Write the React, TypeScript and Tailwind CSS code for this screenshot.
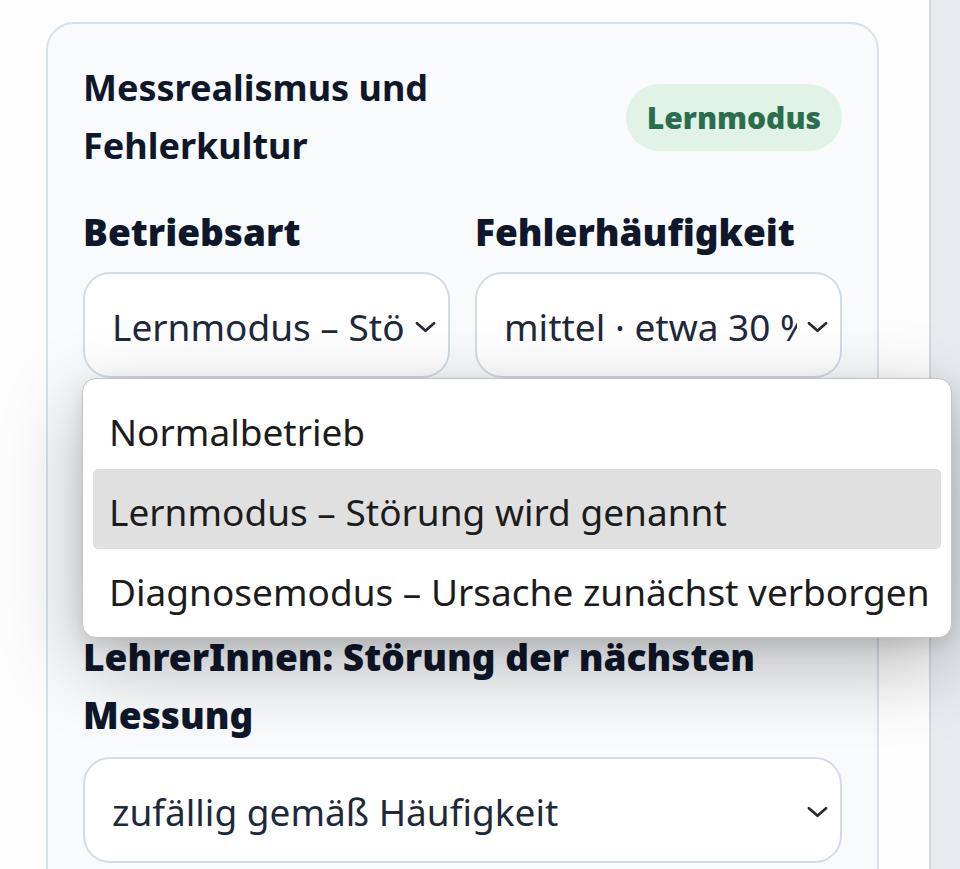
import { useState } from 'react';

const MODES = [
  'Normalbetrieb',
  'Lernmodus – Störung wird genannt',
  'Diagnosemodus – Ursache zunächst verborgen',
];

function Chevron() {
  return (
    <svg viewBox="0 0 22 12" className="w-[21px] h-[12px] shrink-0" fill="none">
      <path d="M2 2l9 8 9-8" stroke="#262a33" strokeWidth="2.8" strokeLinecap="round" strokeLinejoin="round" />
    </svg>
  );
}

function FakeSelect({ value }: { value: string }) {
  return (
    <div className="flex items-center h-[106px] bg-white border-2 border-[#d3dbe5] rounded-[27px] pl-[27px] pr-[12px]">
      <span className="flex-1 min-w-0 overflow-hidden whitespace-nowrap text-[37px] leading-[58px] text-[#1e293b] pt-[4px]">
        {value}
      </span>
      <span className="ml-[10px] flex items-center pt-[4px]">
        <Chevron />
      </span>
    </div>
  );
}

export default function App() {
  const [mode] = useState(1);

  return (
    <div className="relative h-[869px] overflow-hidden bg-[#fdfdfe] font-['Noto_Sans',sans-serif] flex">
      <div className="flex-1 pl-[46px] pt-[22px]">
        <div className="w-[833px] bg-[#f8fafc] border-2 border-[#d8e0ea] rounded-[28px] p-[35px] pb-[60px]">
          <div className="flex items-center justify-between gap-6">
            <h2 className="flex-1 min-w-0 text-[36px] leading-[58px] font-bold text-[#0f172a]">
              Messrealismus und Fehlerkultur
            </h2>
            <span className="shrink-0 h-[67px] flex items-center px-[21px] rounded-full bg-[#e1f3e7] text-[#2b6e4e] text-[30px] font-black">
              Lernmodus
            </span>
          </div>

          <div className="grid grid-cols-2 gap-x-[25px] mt-[28px]">
            <div>
              <div className="text-[37px] leading-[58px] font-black text-[#0f172a]">Betriebsart</div>
              <div className="mt-[11px]">
                <FakeSelect value={MODES[mode]} />
              </div>
            </div>
            <div>
              <div className="text-[37px] leading-[58px] font-black text-[#0f172a]">Fehlerhäufigkeit</div>
              <div className="mt-[11px]">
                <FakeSelect value="mittel · etwa 30 %" />
              </div>
            </div>
          </div>

          {/* the rest of the form sits under the open list */}
          <div className="h-[250px]" />

          <div className="text-[37px] leading-[58px] font-black text-[#0f172a]">
            LehrerInnen: Störung der nächsten Messung
          </div>
          <div className="mt-[13px]">
            <FakeSelect value="zufällig gemäß Häufigkeit" />
          </div>
        </div>
      </div>

      <div className="w-[31px] shrink-0 border-l-2 border-[#d3d8df] bg-[#e8ebef]" />

      {/* open native-style dropdown list */}
      <div className="absolute left-[82px] top-[378px] w-[870px] h-[260px] bg-white border border-[#c4c4c4] rounded-[14px] px-[10px] py-[10px] shadow-[0_26px_80px_rgba(0,0,0,0.28),0_6px_18px_rgba(0,0,0,0.1)]">
        {MODES.map((m, i) => (
          <div
            key={m}
            className={`h-[80px] flex items-center pl-[16px] pt-[6px] rounded-[5px] text-[37px] text-[#1c1c1c] whitespace-nowrap ${
              i === mode ? 'bg-[#e0e0e0]' : ''
            }`}
          >
            {m}
          </div>
        ))}
      </div>
    </div>
  );
}
